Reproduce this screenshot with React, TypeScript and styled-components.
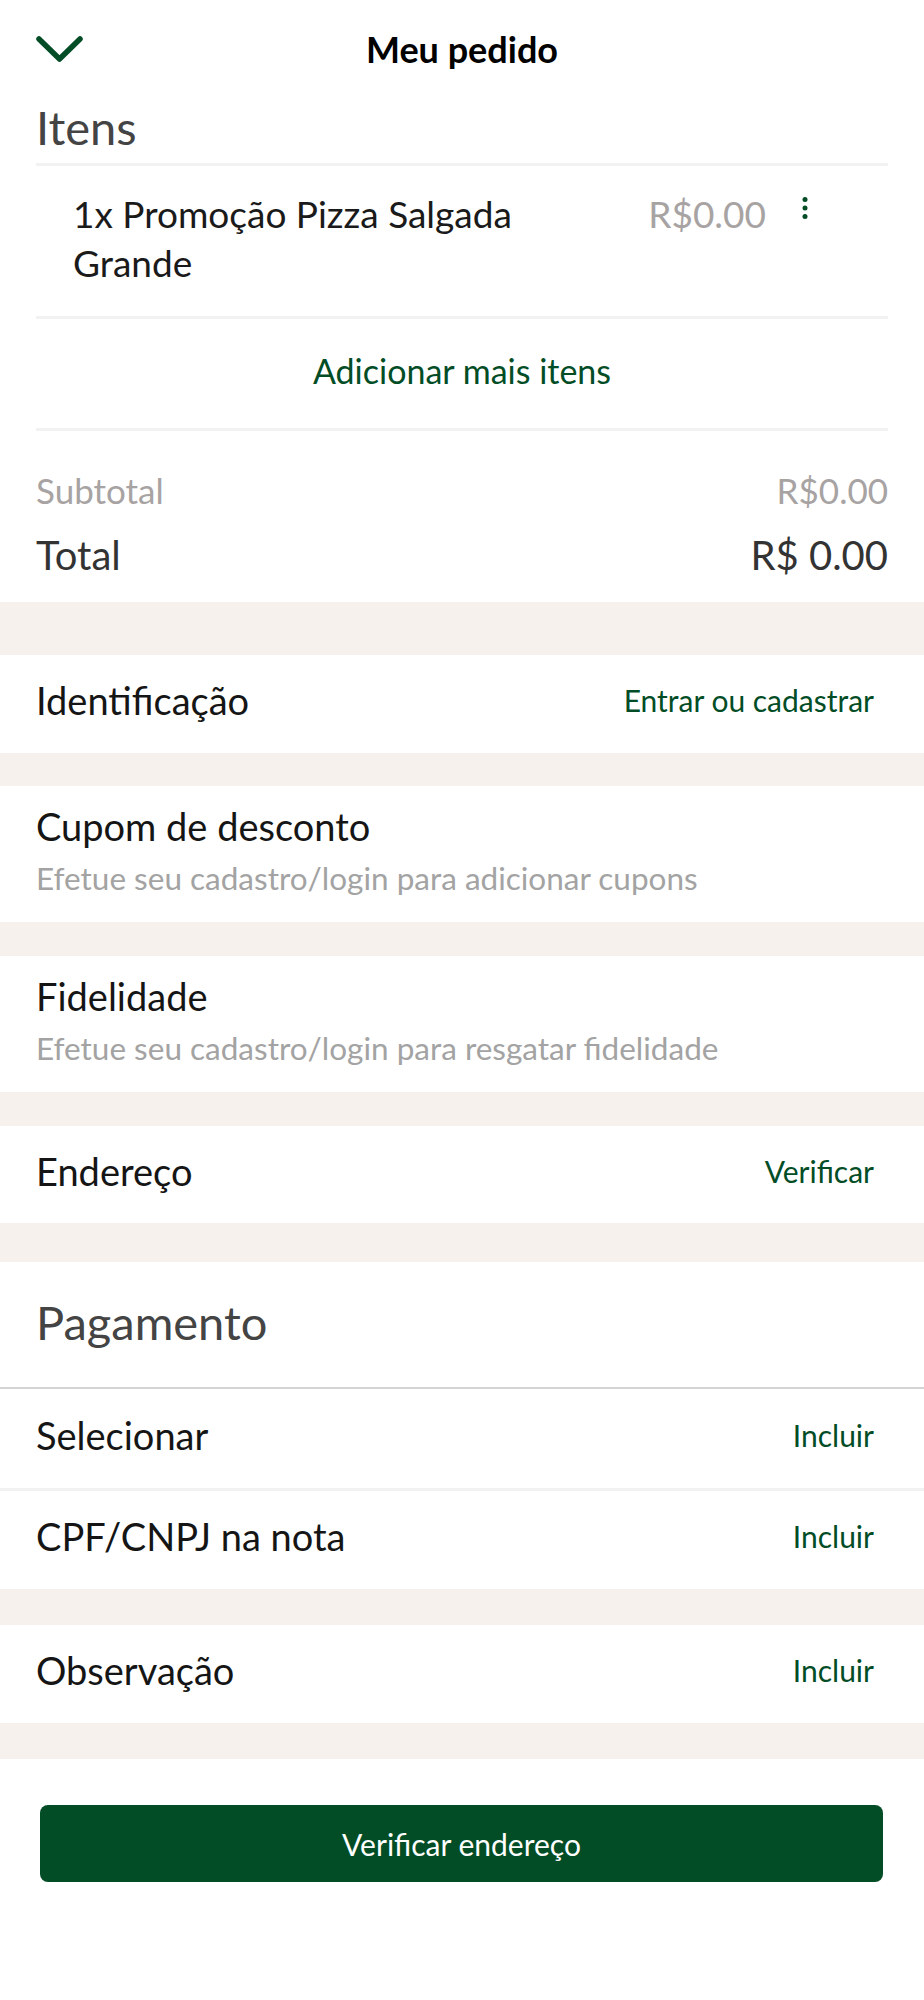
import styled, { createGlobalStyle } from "styled-components";

const GlobalStyle = createGlobalStyle`
  * { box-sizing: border-box; }
  body {
    margin: 0;
    background: #ffffff;
    font-family: Lato, "Noto Sans", sans-serif;
    -webkit-font-smoothing: antialiased;
  }
`;

const GREEN = "#024d26";
const BEIGE = "#f6f1ed";

const Page = styled.div`
  width: 924px;
  min-height: 2000px;
  background: #fff;
`;

const Header = styled.header`
  height: 96px;
  display: grid;
  grid-template-columns: 1fr auto 1fr;
  align-items: center;
  padding: 2px 36px 0;
`;

const BackButton = styled.button`
  justify-self: start;
  display: flex;
  padding: 0;
  border: 0;
  background: none;
  cursor: pointer;
`;

const HeaderTitle = styled.h1`
  margin: 0;
  font-size: 36px;
  font-weight: 700;
  color: #000;
`;

const ItemsBlock = styled.section`
  padding: 0 36px;
`;

const SectionTitle = styled.h2<{ $height: number }>`
  margin: 0;
  height: ${(p) => p.$height}px;
  display: flex;
  align-items: center;
  padding-bottom: 6px;
  font-size: 47px;
  font-weight: 400;
  color: #444;
`;

const Divider = styled.div<{ $color?: string; $size?: number }>`
  height: ${(p) => p.$size ?? 3}px;
  background: ${(p) => p.$color ?? "#f2f2f2"};
`;

const ItemRow = styled.div`
  height: 150px;
  display: grid;
  grid-template-columns: 1fr auto 78px;
  align-items: start;
  padding: 23px 44px 0 37px;
`;

const ItemName = styled.div`
  max-width: 500px;
  font-size: 37px;
  line-height: 49px;
  color: #1a1a1a;
`;

const ItemPrice = styled.div`
  font-size: 37px;
  line-height: 49px;
  color: #a8a3a3;
`;

const MenuButton = styled.button`
  justify-self: center;
  display: flex;
  margin-top: 8px;
  padding: 0;
  border: 0;
  background: none;
`;

const AddMore = styled.div`
  height: 109px;
  display: flex;
  align-items: center;
  justify-content: center;
  padding-bottom: 6px;
  font-size: 34px;
  color: ${GREEN};
`;

const Summary = styled.div`
  padding: 32px 0 9px;
`;

const SummaryLine = styled.div<{ $total?: boolean }>`
  height: ${(p) => (p.$total ? 76 : 54)}px;
  display: flex;
  align-items: center;
  justify-content: space-between;
  font-size: ${(p) => (p.$total ? 40 : 35)}px;
  color: ${(p) => (p.$total ? "#333" : "#a8a3a3")};
`;

const Gap = styled.div<{ $height: number }>`
  height: ${(p) => p.$height}px;
  background: ${BEIGE};
`;

const Row = styled.div<{ $height?: number }>`
  height: ${(p) => p.$height ?? 98}px;
  display: flex;
  align-items: center;
  justify-content: space-between;
  padding: 0 50px 8px 36px;
  background: #fff;
`;

const Label = styled.span`
  font-size: 38px;
  color: #151515;
`;

const Action = styled.span`
  font-size: 30px;
  color: ${GREEN};
`;

const InfoBlock = styled.div`
  display: flex;
  flex-direction: column;
  padding: 16px 36px 19px;
  background: #fff;
`;

const InfoTitle = styled.span`
  margin-bottom: 3px;
  font-size: 38px;
  line-height: 48px;
  color: #151515;
`;

const InfoText = styled.span`
  font-size: 31.5px;
  line-height: 50px;
  color: #a3a3a3;
`;

const PaymentHead = styled.div`
  padding: 0 36px;
`;

const Footer = styled.div`
  padding: 46px 41px 0 40px;
`;

const PrimaryButton = styled.button`
  width: 100%;
  height: 77px;
  border: 0;
  border-radius: 8px;
  background: ${GREEN};
  color: #fff;
  font-family: inherit;
  font-size: 30px;
`;

function ChevronDown() {
  return (
    <svg width="48" height="28" viewBox="0 0 48 28" fill="none">
      <path d="M3 4 L23.5 24 L44 4" stroke={GREEN} strokeWidth="5.5" strokeLinecap="round" strokeLinejoin="round" />
    </svg>
  );
}

function DotsVertical() {
  return (
    <svg width="8" height="22" viewBox="0 0 8 22">
      <circle cx="4" cy="2.6" r="2.5" fill={GREEN} />
      <circle cx="4" cy="11" r="2.5" fill={GREEN} />
      <circle cx="4" cy="19.4" r="2.5" fill={GREEN} />
    </svg>
  );
}

export default function App() {
  return (
    <>
      <GlobalStyle />
      <Page>
        <Header>
          <BackButton aria-label="Voltar">
            <ChevronDown />
          </BackButton>
          <HeaderTitle>Meu pedido</HeaderTitle>
          <span />
        </Header>

        <ItemsBlock>
          <SectionTitle $height={67}>Itens</SectionTitle>
          <Divider />
          <ItemRow>
            <ItemName>1x Promoção Pizza Salgada Grande</ItemName>
            <ItemPrice>R$0.00</ItemPrice>
            <MenuButton aria-label="Opções">
              <DotsVertical />
            </MenuButton>
          </ItemRow>
          <Divider />
          <AddMore>Adicionar mais itens</AddMore>
          <Divider />
          <Summary>
            <SummaryLine>
              <span>Subtotal</span>
              <span>R$0.00</span>
            </SummaryLine>
            <SummaryLine $total>
              <span>Total</span>
              <span>R$ 0.00</span>
            </SummaryLine>
          </Summary>
        </ItemsBlock>

        <Gap $height={53} />
        <Row>
          <Label>Identificação</Label>
          <Action>Entrar ou cadastrar</Action>
        </Row>
        <Gap $height={33} />
        <InfoBlock>
          <InfoTitle>Cupom de desconto</InfoTitle>
          <InfoText>Efetue seu cadastro/login para adicionar cupons</InfoText>
        </InfoBlock>
        <Gap $height={34} />
        <InfoBlock>
          <InfoTitle>Fidelidade</InfoTitle>
          <InfoText>Efetue seu cadastro/login para resgatar fidelidade</InfoText>
        </InfoBlock>
        <Gap $height={34} />
        <Row $height={97}>
          <Label>Endereço</Label>
          <Action>Verificar</Action>
        </Row>
        <Gap $height={39} />

        <PaymentHead>
          <SectionTitle $height={125}>Pagamento</SectionTitle>
        </PaymentHead>
        <Divider $color="#d4d4d4" $size={2} />
        <Row $height={99}>
          <Label>Selecionar</Label>
          <Action>Incluir</Action>
        </Row>
        <Divider />
        <Row>
          <Label>CPF/CNPJ na nota</Label>
          <Action>Incluir</Action>
        </Row>
        <Gap $height={36} />
        <Row>
          <Label>Observação</Label>
          <Action>Incluir</Action>
        </Row>
        <Gap $height={36} />

        <Footer>
          <PrimaryButton>Verificar endereço</PrimaryButton>
        </Footer>
      </Page>
    </>
  );
}
